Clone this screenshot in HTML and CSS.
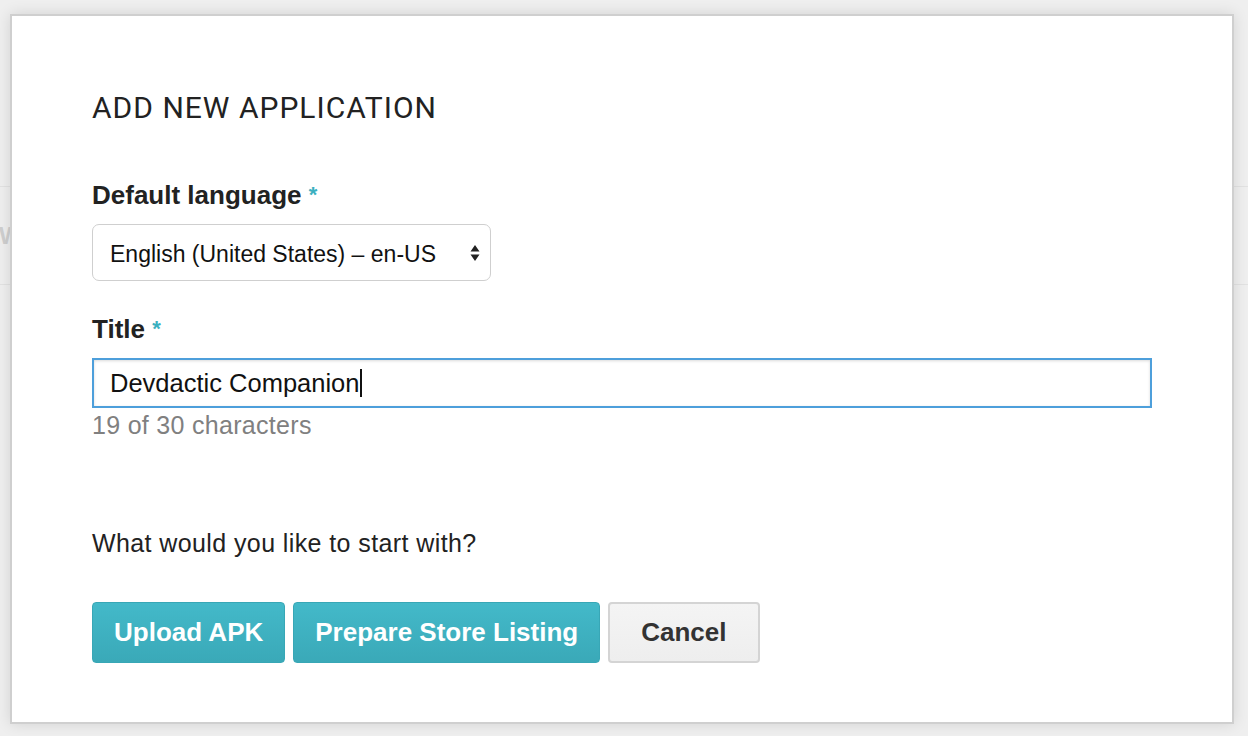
FILE: index.html
```html
<!DOCTYPE html>
<html>
<head>
<meta charset="utf-8">
<link rel="stylesheet" href="styles.css">
</head>
<body>
<div class="backdrop">
  <div class="bg-row"><span class="bg-letter">W</span></div>
</div>
<div class="dialog">
  <h1 class="dialog-title">ADD NEW APPLICATION</h1>
  <div class="field">
    <label class="field-label">Default language <span class="req">*</span></label>
    <div class="select">
      <span class="select-value">English (United States) – en-US</span>
      <svg class="select-arrows" width="10" height="18" viewBox="0 0 10 18"><path d="M5 1 L9.5 7.5 L0.5 7.5 Z M5 17 L9.5 10.5 L0.5 10.5 Z" fill="#222"/></svg>
    </div>
  </div>
  <div class="field field-title">
    <label class="field-label">Title <span class="req">*</span></label>
    <div class="input"><span class="input-value">Devdactic Companion</span><span class="caret"></span></div>
    <div class="helper">19 of 30 characters</div>
  </div>
  <p class="question">What would you like to start with?</p>
  <div class="actions">
    <button class="btn btn-primary">Upload APK</button>
    <button class="btn btn-primary">Prepare Store Listing</button>
    <button class="btn btn-default">Cancel</button>
  </div>
</div>
</body>
</html>
```
FILE: styles.css
```css
html, body {
  margin: 0;
  padding: 0;
}
body {
  width: 1248px;
  height: 736px;
  background: #efefef;
  font-family: "Liberation Sans", Arial, sans-serif;
  color: #222;
  overflow: hidden;
  position: relative;
}
.backdrop {
  padding-top: 186px;
}
.bg-row {
  height: 97px;
  border-top: 1px solid #e2e2e2;
  border-bottom: 1px solid #e2e2e2;
  display: flex;
  align-items: center;
}
.bg-letter {
  font-size: 24px;
  font-weight: bold;
  color: #cfcfcf;
  margin-left: -1px;
}
.dialog {
  position: absolute;
  left: 10px;
  top: 14px;
  width: 1224px;
  height: 710px;
  background: #fff;
  border: 2px solid #cfcfcf;
  box-shadow: 0 0 14px rgba(0,0,0,0.12);
  padding: 75px 80px 0 80px;
  box-sizing: border-box;
}
.dialog-title {
  margin: 0;
  font-family: Roboto, "Liberation Sans", sans-serif;
  font-weight: 400;
  font-size: 30px;
  line-height: 34px;
  color: #222;
  letter-spacing: 1px;
}
.field {
  display: flex;
  flex-direction: column;
  align-items: flex-start;
}
.field-label {
  font-size: 26px;
  font-weight: bold;
  line-height: 30px;
  color: #222;
  margin-top: 55px;
  margin-bottom: 14px;
}
.field-title .field-label {
  margin-top: 33px;
  margin-bottom: 14px;
}
.req {
  color: #3bb0c0;
  font-size: 22px;
  vertical-align: 2px;
}
.select {
  width: 399px;
  height: 57px;
  box-sizing: border-box;
  border: 1px solid #cfcfcf;
  border-radius: 7px;
  display: flex;
  align-items: center;
  justify-content: space-between;
  padding: 3px 10px 0 17px;
  font-size: 23px;
  color: #111;
}
.select-arrows {
  margin-top: -3px;
}
.input {
  width: 1060px;
  height: 50px;
  box-sizing: border-box;
  border: 2px solid #4d9fdb;
  box-shadow: inset 0 1px 3px rgba(0,0,0,0.15);
  display: flex;
  align-items: center;
  padding-left: 16px;
  font-size: 25.5px;
  color: #111;
}
.caret {
  display: inline-block;
  width: 2px;
  height: 28px;
  background: #111;
  margin-left: 1px;
}
.helper {
  font-size: 25px;
  line-height: 28px;
  letter-spacing: 0.3px;
  color: #808080;
  margin-top: 3px;
}
.question {
  margin: 90px 0 0 0;
  font-size: 25px;
  line-height: 28px;
  letter-spacing: 0.4px;
  color: #222;
}
.actions {
  display: flex;
  gap: 8px;
  margin-top: 45px;
}
.btn {
  height: 61px;
  font-family: "Liberation Sans", Arial, sans-serif;
  font-size: 26px;
  font-weight: bold;
  border-radius: 4px;
  cursor: pointer;
}
.btn-primary {
  background: linear-gradient(#43b9c9, #3aa9b8);
  border: 1px solid #38a7b6;
  color: #fff;
  padding: 0 21px;
}
.btn-default {
  background: linear-gradient(#f4f4f4, #eeeeee);
  border: 2px solid #d4d4d4;
  color: #333;
  padding: 0 31px;
}
```
